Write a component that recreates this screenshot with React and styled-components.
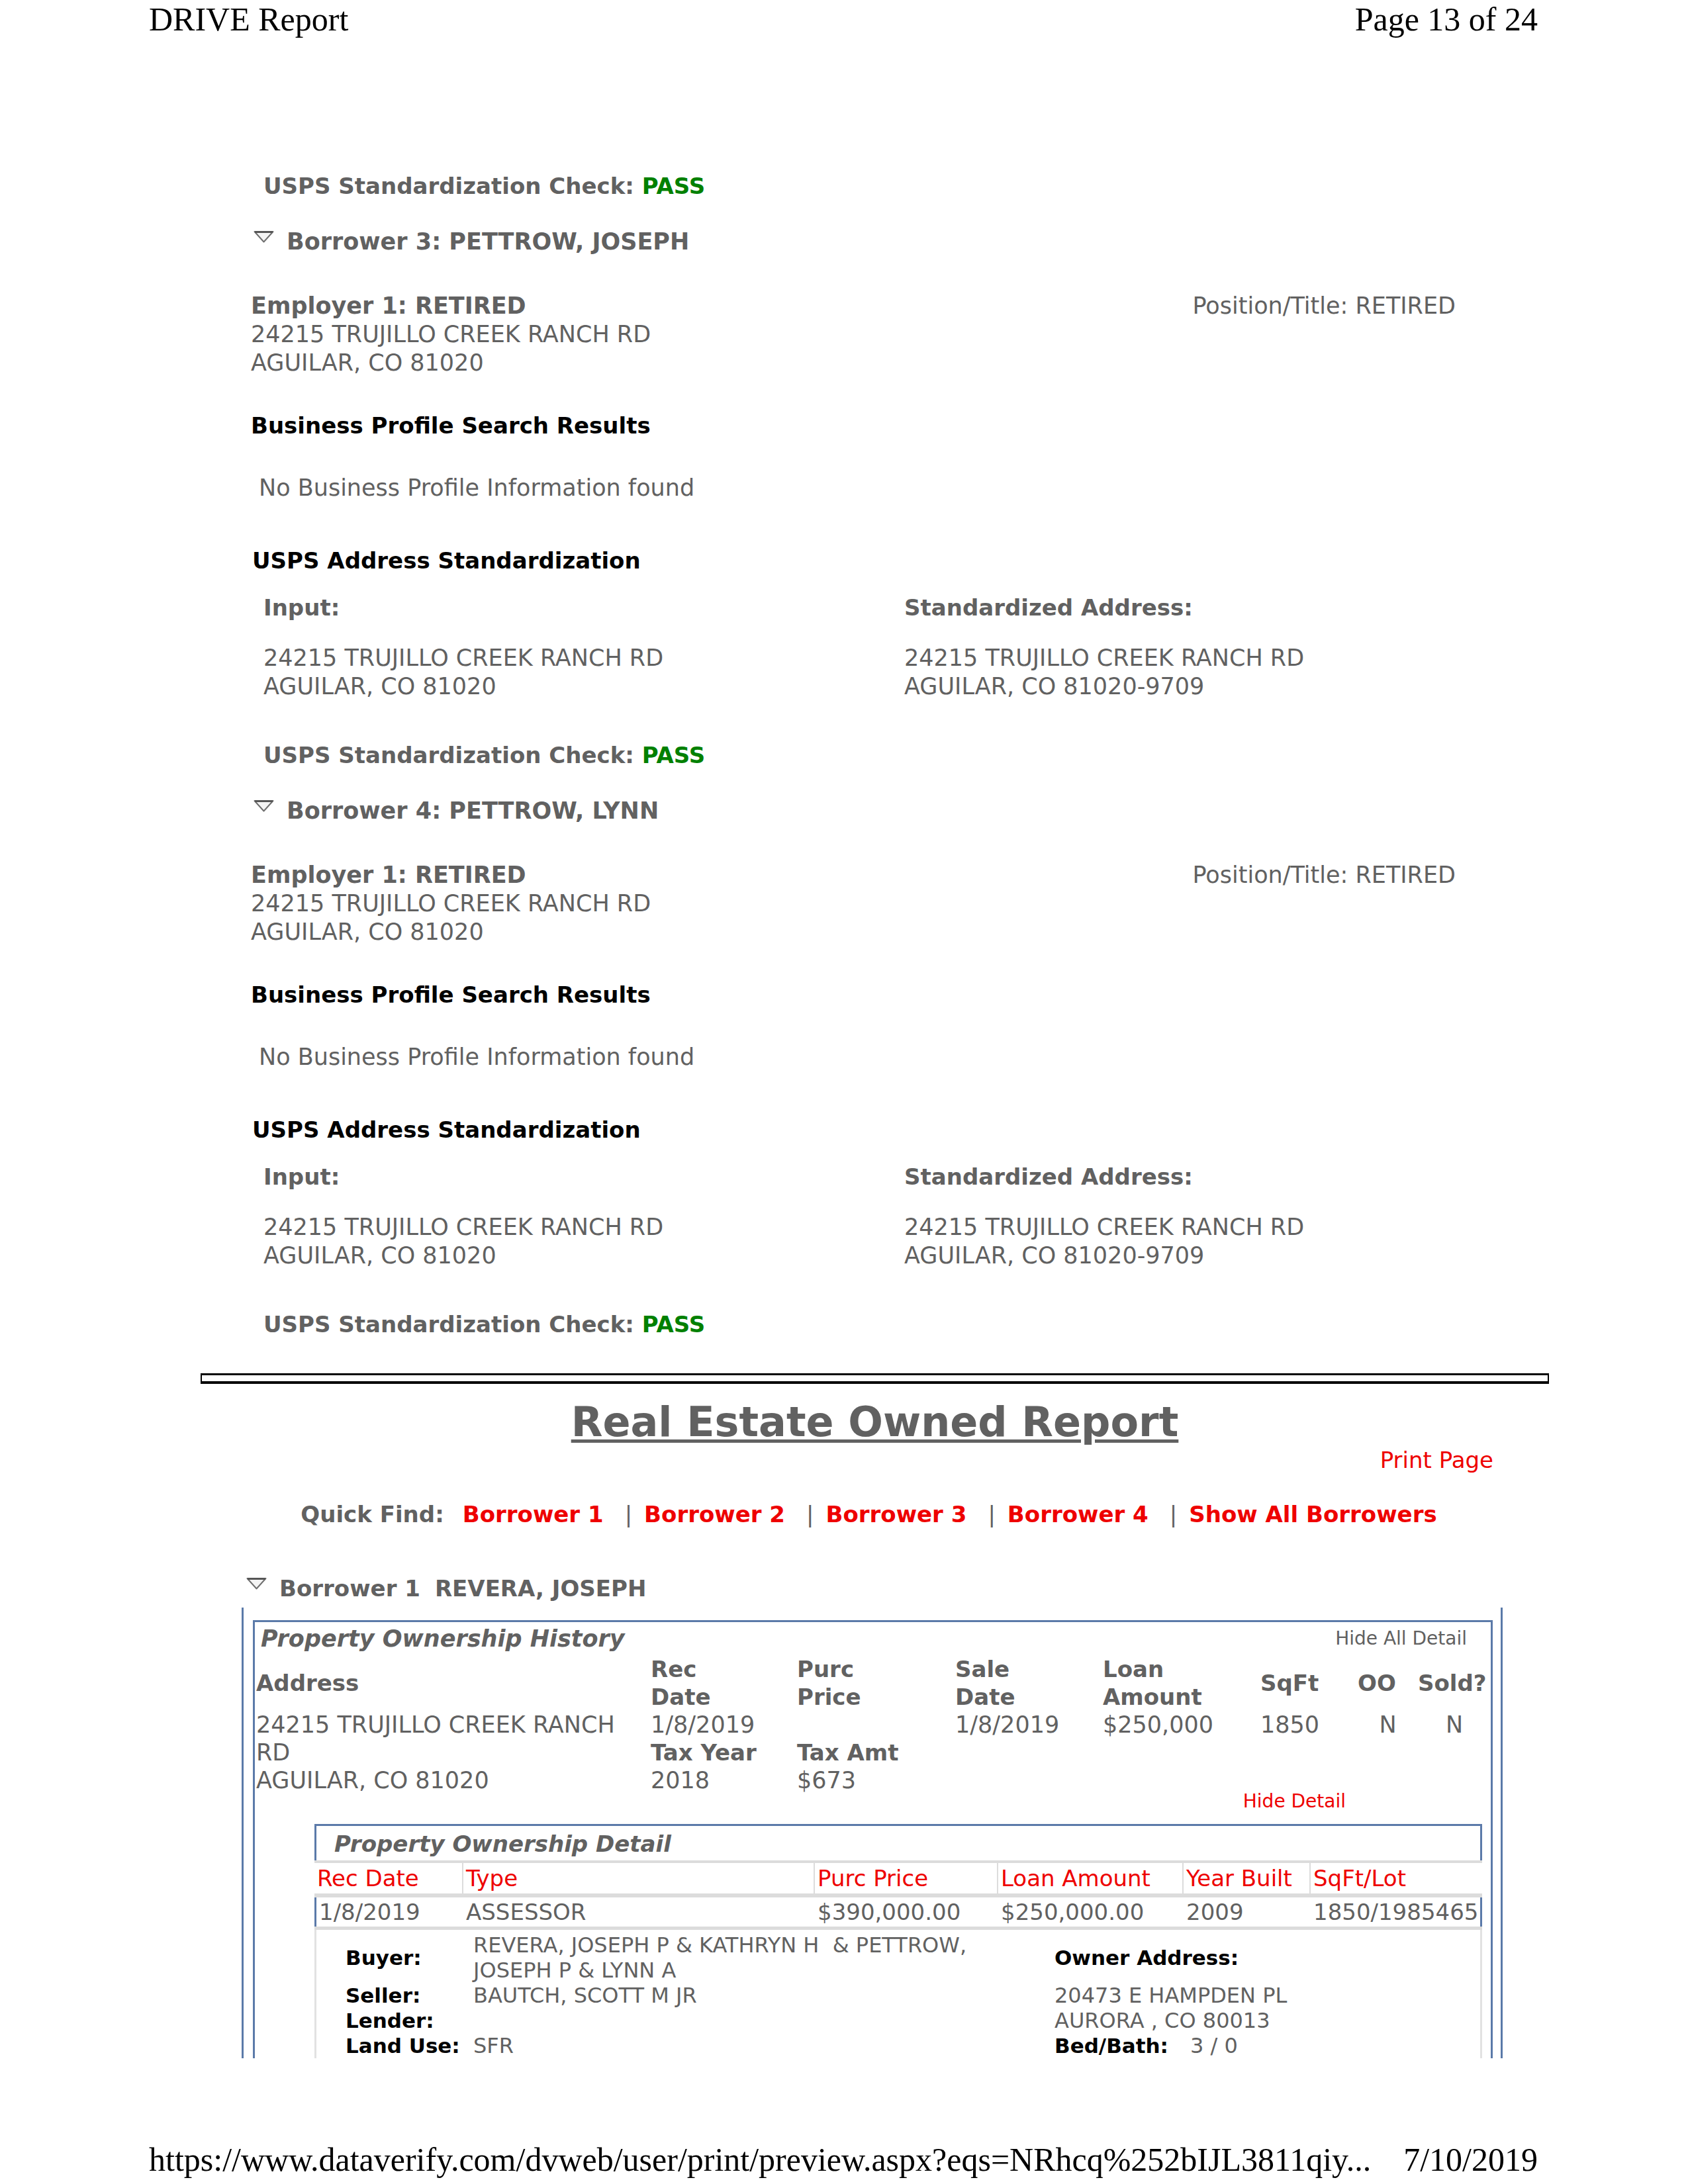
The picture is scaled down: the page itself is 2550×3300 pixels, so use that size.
import React from "react"
import styled, { createGlobalStyle } from "styled-components"

const GRAY = "#616161"
const BLUE = "#5b7aa9"
const RED = "#ee0000"
const GREEN = "#008000"
const LIGHT = "#dcdcdc"

const GlobalStyle = createGlobalStyle`
  html, body {
    margin: 0;
    padding: 0;
    background: #fff;
  }
  body {
    font-family: "DejaVu Sans", Verdana, sans-serif;
  }
`

const Page = styled.div`
  width: 2550px;
  height: 3300px;
  display: flex;
  flex-direction: column;
  overflow: hidden;
  background: #fff;
`

const PrintBar = styled.div`
  display: flex;
  justify-content: space-between;
  height: 58px;
  padding: 0 227px 0 225px;
  margin-top: ${p => p.$top || 0}px;
  font-family: "Liberation Serif", "Times New Roman", serif;
  font-size: 50px;
  line-height: 58px;
  color: #000;
  white-space: nowrap;
`

// the printed page is cut right under the last detail row
const Sheet = styled.div`
  height: 3054px;
  overflow: hidden;
  font-family: "DejaVu Sans", Verdana, sans-serif;
  font-size: 35px;
  line-height: 42px;
  color: ${GRAY};
`

const Section = styled.div`
  padding: 0 351px 0 379px;
`

const Line = styled.div`
  margin-top: ${p => p.$mt || 0}px;
  padding-left: ${p => p.$indent || 0}px;
  font-size: ${p => p.$size || 35}px;
  font-weight: ${p => (p.$bold ? 700 : 400)};
  color: ${p => (p.$dark ? "#000" : GRAY)};
  white-space: nowrap;
`

const Pass = styled.span`
  color: ${GREEN};
`

const BorrowerHead = styled.div`
  display: flex;
  align-items: flex-start;
  margin-top: ${p => p.$mt || 0}px;
  padding-left: ${p => p.$indent || 0}px;
  font-size: ${p => p.$size || 35}px;
  font-weight: 700;
  white-space: nowrap;
`

const Toggle = styled.svg`
  flex: none;
  width: 31px;
  height: 19px;
  margin: 4px 19px 0 0;
`

const Name = styled.span`
  margin-left: 22px;
`

const EmployerRow = styled.div`
  display: flex;
  justify-content: space-between;
  margin-top: 55px;
  line-height: 43px;
`

const Block = styled.div`
  line-height: 43px;
  white-space: nowrap;
`

const Strong = styled.div`
  font-weight: 700;
`

const StdLabel = styled.div`
  font-size: 34px;
  font-weight: 700;
`

const StdGrid = styled.div`
  display: grid;
  grid-template-columns: 968px 1fr;
  row-gap: 34px;
  margin-top: 29px;
  padding-left: 19px;
`

const Report = styled.div`
  width: 2037px;
  margin: 53px 0 0 303px;
`

const DoubleRule = styled.div`
  height: 9px;
  border: 3px solid #000;
  border-bottom-width: 4px;
  border-left-width: 2px;
  border-right-width: 2px;
`

const ReportTitle = styled.h1`
  margin: 22px 0 0;
  font-size: 62px;
  line-height: 72px;
  font-weight: 700;
  text-align: center;
  color: ${GRAY};
  text-decoration: underline;
  text-decoration-thickness: 5px;
  text-underline-offset: 5px;
`

const PrintLink = styled.div`
  text-align: right;
  padding-right: 84px;
  font-size: 34px;
  color: ${RED};
`

const QuickFind = styled.div`
  display: flex;
  justify-content: center;
  margin-top: 40px;
  padding-right: 18px;
  font-size: 34px;
  font-weight: 700;
  white-space: nowrap;
`

const QuickLabel = styled.span`
  margin-right: 28px;
  color: ${GRAY};
`

const QuickLink = styled.span`
  color: ${RED};
`

const Sep = styled.span`
  margin: 0 18px 0 32px;
  font-weight: 400;
  color: ${GRAY};
`

const Panel = styled.div`
  box-sizing: border-box;
  width: 1905px;
  margin: 8px 0 0 62px;
  padding: 19px 12px 0 14px;
  border-left: 3px solid ${BLUE};
  border-right: 3px solid ${BLUE};
`

const HistoryBox = styled.div`
  border: 3px solid ${BLUE};
  border-bottom: none;
  padding-left: 2px;
`

const BoxTitleRow = styled.div`
  display: flex;
  justify-content: space-between;
  align-items: center;
  margin-top: 4px;
  padding: 0 36px 0 7px;
`

const BoxTitle = styled.span`
  font-style: italic;
  font-weight: 700;
`

const SmallLink = styled.span`
  font-size: 28px;
  color: ${p => (p.$red ? RED : GRAY)};
`

const HistGrid = styled.div`
  display: grid;
  grid-template-columns: 596px 221px 239px 223px 238px 147px 91px 1fr;
  grid-auto-rows: 42px;
  margin-top: 4px;
  white-space: nowrap;
`

const Cell = styled.div`
  grid-column: ${p => p.$col};
  grid-row: ${p => p.$row};
  align-self: ${p => (p.$middle ? "center" : "start")};
  justify-self: ${p => (p.$center ? "center" : "start")};
  font-size: ${p => (p.$bold ? 34 : 35)}px;
  font-weight: ${p => (p.$bold ? 700 : 400)};
`

const HideRow = styled.div`
  display: flex;
  justify-content: flex-end;
  margin-top: -6px;
  padding-right: 219px;
  line-height: 34px;
`

const DetailBox = styled.div`
  margin: 17px 13px 0 88px;
  font-size: 34px;
`

const DetailTitle = styled.div`
  padding: 6px 0 4px 27px;
  border: 3px solid ${BLUE};
  border-bottom: none;
  font-style: italic;
  font-weight: 700;
`

const HeadRow = styled.div`
  display: grid;
  grid-template-columns: 223px 529px 275px 278px 190px 1fr;
  column-gap: 2px;
  padding: 4px 0 6px;
  background: ${LIGHT};
`

const HeadCell = styled.div`
  height: 46px;
  padding-left: 4px;
  line-height: 46px;
  background: #fff;
  color: ${RED};
  white-space: nowrap;
`

const DataRow = styled.div`
  display: grid;
  grid-template-columns: 220px 529px 275px 278px 190px 1fr;
  column-gap: 2px;
  height: 44px;
  line-height: 44px;
  border-left: 3px solid ${BLUE};
  border-right: 3px solid ${BLUE};
  white-space: nowrap;
`

const DataCell = styled.div`
  padding-left: 4px;
`

const Band = styled.div`
  height: 5px;
  background: ${LIGHT};
`

const InfoGrid = styled.div`
  display: grid;
  grid-template-columns: 193px 878px 1fr;
  padding: 4px 0 0 44px;
  border-left: 3px solid #e2e2e2;
  border-right: 3px solid #e2e2e2;
  font-size: 31px;
  line-height: 38px;
  white-space: nowrap;
`

const InfoLabel = styled.div`
  align-self: center;
  font-weight: 700;
  color: #000;
`

const InfoValue = styled.div`
  align-self: center;
  font-size: 32px;
  color: ${GRAY};
`

const BedBath = styled.span`
  margin-left: 33px;
  font-size: 32px;
  font-weight: 400;
  color: ${GRAY};
`

const Triangle = () => (
  <Toggle viewBox="0 0 31 19">
    <polygon points="1.5,2 29.5,2 15.5,17.5" fill="#f4f4f4" stroke="#6f6f6f" strokeWidth="2" strokeLinejoin="round" />
    <line x1="2" y1="2.5" x2="29" y2="2.5" stroke="#555" strokeWidth="3" />
  </Toggle>
)

const UspsCheck = ({ mt }) => (
  <Line $mt={mt} $indent={19} $size={34} $bold>
    USPS Standardization Check: <Pass>PASS</Pass>
  </Line>
)

const BorrowerInfo = ({ num, name }) => (
  <>
    <BorrowerHead $mt={42} $indent={4}>
      <Triangle />
      <span>Borrower {num}: {name}</span>
    </BorrowerHead>
    <EmployerRow>
      <Block>
        <Strong>Employer 1: RETIRED</Strong>
        24215 TRUJILLO CREEK RANCH RD
        <br />
        AGUILAR, CO 81020
      </Block>
      <span>Position/Title: RETIRED</span>
    </EmployerRow>
    <Line $mt={52} $size={34} $bold $dark>Business Profile Search Results</Line>
    <Line $mt={52} $indent={12}>No Business Profile Information found</Line>
    <Line $mt={68} $indent={2} $size={34} $bold $dark>USPS Address Standardization</Line>
    <StdGrid>
      <StdLabel>Input:</StdLabel>
      <StdLabel>Standardized Address:</StdLabel>
      <Block>
        24215 TRUJILLO CREEK RANCH RD
        <br />
        AGUILAR, CO 81020
      </Block>
      <Block>
        24215 TRUJILLO CREEK RANCH RD
        <br />
        AGUILAR, CO 81020-9709
      </Block>
    </StdGrid>
    <UspsCheck mt={61} />
  </>
)

const quickLinks = ["Borrower 2", "Borrower 3", "Borrower 4", "Show All Borrowers"]

const historyHeads = [
  ["Address"],
  ["Rec", "Date"],
  ["Purc", "Price"],
  ["Sale", "Date"],
  ["Loan", "Amount"],
  ["SqFt"],
  ["OO"],
  ["Sold?"],
]

const detailHeads = ["Rec Date", "Type", "Purc Price", "Loan Amount", "Year Built", "SqFt/Lot"]
const detailData = ["1/8/2019", "ASSESSOR", "$390,000.00", "$250,000.00", "2009", "1850/1985465"]

const App = () => (
  <Page>
    <GlobalStyle />
    <PrintBar>
      <span>DRIVE Report</span>
      <span>Page 13 of 24</span>
    </PrintBar>

    <Sheet>
      <Section>
        <UspsCheck mt={202} />
        <BorrowerInfo num={3} name="PETTROW, JOSEPH" />
        <BorrowerInfo num={4} name="PETTROW, LYNN" />
      </Section>

      <Report>
        <DoubleRule />
        <ReportTitle>Real Estate Owned Report</ReportTitle>
        <PrintLink>Print Page</PrintLink>
        <QuickFind>
          <QuickLabel>Quick Find:</QuickLabel>
          <QuickLink>Borrower 1</QuickLink>
          {quickLinks.map(l => (
            <React.Fragment key={l}>
              <Sep>|</Sep>
              <QuickLink>{l}</QuickLink>
            </React.Fragment>
          ))}
        </QuickFind>

        <BorrowerHead $mt={70} $indent={69} $size={34}>
          <Triangle />
          <span>Borrower 1</span>
          <Name>REVERA, JOSEPH</Name>
        </BorrowerHead>

        <Panel>
          <HistoryBox>
            <BoxTitleRow>
              <BoxTitle>Property Ownership History</BoxTitle>
              <SmallLink>Hide All Detail</SmallLink>
            </BoxTitleRow>
            <HistGrid>
              {historyHeads.map((h, i) => (
                <Cell key={h[0]} $col={i + 1} $row="1 / span 2" $middle={h.length === 1} $bold>
                  {h.map((t, j) => (
                    <div key={j}>{t}</div>
                  ))}
                </Cell>
              ))}
              <Cell $col={1} $row="3 / span 3">
                24215 TRUJILLO CREEK RANCH
                <br />
                RD
                <br />
                AGUILAR, CO 81020
              </Cell>
              <Cell $col={2} $row={3}>1/8/2019</Cell>
              <Cell $col={4} $row={3}>1/8/2019</Cell>
              <Cell $col={5} $row={3}>$250,000</Cell>
              <Cell $col={6} $row={3}>1850</Cell>
              <Cell $col={7} $row={3} $center>N</Cell>
              <Cell $col={8} $row={3} $center>N</Cell>
              <Cell $col={2} $row={4} $bold>Tax Year</Cell>
              <Cell $col={3} $row={4} $bold>Tax Amt</Cell>
              <Cell $col={2} $row={5}>2018</Cell>
              <Cell $col={3} $row={5}>$673</Cell>
            </HistGrid>
            <HideRow>
              <SmallLink $red>Hide Detail</SmallLink>
            </HideRow>

            <DetailBox>
              <DetailTitle>Property Ownership Detail</DetailTitle>
              <HeadRow>
                {detailHeads.map(h => (
                  <HeadCell key={h}>{h}</HeadCell>
                ))}
              </HeadRow>
              <DataRow>
                {detailData.map(d => (
                  <DataCell key={d}>{d}</DataCell>
                ))}
              </DataRow>
              <Band />
              <InfoGrid>
                <InfoLabel>Buyer:</InfoLabel>
                <InfoValue>
                  REVERA, JOSEPH P &amp; KATHRYN H&nbsp; &amp; PETTROW,
                  <br />
                  JOSEPH P &amp; LYNN A
                </InfoValue>
                <InfoLabel>Owner Address:</InfoLabel>
                <InfoLabel>Seller:</InfoLabel>
                <InfoValue>BAUTCH, SCOTT M JR</InfoValue>
                <InfoValue>20473 E HAMPDEN PL</InfoValue>
                <InfoLabel>Lender:</InfoLabel>
                <InfoValue />
                <InfoValue>AURORA , CO 80013</InfoValue>
                <InfoLabel>Land Use:</InfoLabel>
                <InfoValue>SFR</InfoValue>
                <InfoLabel>
                  Bed/Bath:<BedBath>3 / 0</BedBath>
                </InfoLabel>
              </InfoGrid>
            </DetailBox>
          </HistoryBox>
        </Panel>
      </Report>
    </Sheet>

    <PrintBar $top={122}>
      <span>https://www.dataverify.com/dvweb/user/print/preview.aspx?eqs=NRhcq%252bIJL3811qiy...</span>
      <span>7/10/2019</span>
    </PrintBar>
  </Page>
)

export default App
